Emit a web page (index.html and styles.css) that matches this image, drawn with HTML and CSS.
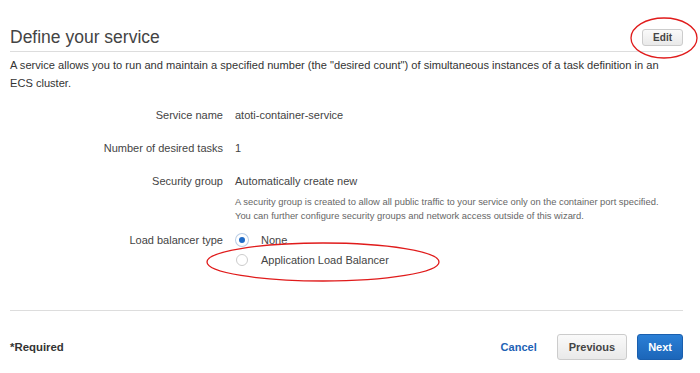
FILE: index.html
```html
<!DOCTYPE html>
<html lang="en">
<head>
  <meta charset="UTF-8">
  <title>Define your service</title>
  <link rel="stylesheet" href="styles.css">
</head>
<body>
  <div class="wizard">
    <div class="section-header">
      <h2>Define your service</h2>
      <button class="btn btn-small">Edit</button>
      <svg class="mark mark-edit" viewBox="0 0 70 44"><ellipse cx="35" cy="22" rx="33" ry="20" /></svg>
    </div>

    <p class="intro">A service allows you to run and maintain a specified number (the "desired count") of simultaneous instances of a task definition in an ECS cluster.</p>

    <div class="form">
      <div class="label">Service name</div>
      <div class="value">atoti-container-service</div>

      <div class="label">Number of desired tasks</div>
      <div class="value">1</div>

      <div class="label">Security group</div>
      <div class="value value-last">
        Automatically create new
        <div class="hint">A security group is created to allow all public traffic to your service only on the container port specified.<br>You can further configure security groups and network access outside of this wizard.</div>
      </div>

      <div class="label">Load balancer type</div>
      <div class="value radios">
        <label class="radio"><span class="dot checked"></span>None</label>
        <label class="radio"><span class="dot"></span>Application Load Balancer</label>
        <svg class="mark mark-alb" viewBox="0 0 236 42"><ellipse cx="118" cy="21" rx="116" ry="19" /></svg>
      </div>
    </div>

    <div class="footer">
      <span class="required">*Required</span>
      <div class="actions">
        <a class="link" href="#">Cancel</a>
        <button class="btn">Previous</button>
        <button class="btn btn-primary">Next</button>
      </div>
    </div>
  </div>
</body>
</html>
```

FILE: styles.css
```css
body {
  margin: 0;
  font-family: "Liberation Sans", Arial, sans-serif;
  color: #444;
  background-color: #fff;
}

.wizard {
  width: 673px;
  margin-left: 10px;
}

.section-header {
  position: relative;
  display: flex;
  justify-content: space-between;
  align-items: flex-end;
  height: 51px;
  border-bottom: 1px solid #ddd;
}

.section-header h2 {
  margin: 0 0 3px;
  font-size: 17.5px;
  line-height: 22px;
  font-weight: normal;
  color: #444;
}

.btn {
  font-family: "Liberation Sans", Arial, sans-serif;
  font-size: 11px;
  font-weight: bold;
  color: #444;
  background: linear-gradient(#fafafa, #e9e9e9);
  border: 1px solid #ccc;
  border-radius: 3px;
  height: 26px;
  padding: 0 11px;
}

.btn-small {
  font-size: 10px;
  height: 17px;
  padding: 0 10px;
  margin-bottom: 5px;
}

.btn-primary {
  color: #fff;
  background: linear-gradient(#2b7fd6, #1c66b9);
  border-color: #1a5fae;
  padding: 0 10px;
}

.mark {
  position: absolute;
  fill: none;
  stroke: #e01b1b;
  stroke-width: 1.3;
  overflow: visible;
}

.mark-edit {
  right: -16px;
  top: 16px;
  width: 70px;
  height: 44px;
}

.intro {
  max-width: 655px;
  margin: 4px 0 0;
  font-size: 11.1px;
  line-height: 18px;
  color: #333;
}

.form {
  display: grid;
  grid-template-columns: 213px 1fr;
  column-gap: 12px;
  margin-top: 15px;
  font-size: 11px;
  line-height: 16px;
}

.label {
  text-align: right;
  margin-bottom: 17px;
}

.value {
  margin-bottom: 17px;
}

.value-last {
  margin-bottom: 9px;
}

.hint {
  margin-top: 6px;
  font-size: 9.4px;
  line-height: 14px;
  color: #666;
}

.radios {
  position: relative;
  display: flex;
  flex-direction: column;
  gap: 4px;
  margin-bottom: 0;
}

.radio {
  display: flex;
  align-items: center;
  gap: 13px;
  margin-left: 1px;
}

.dot {
  width: 12px;
  height: 12px;
  border: 1px solid #ccc;
  border-radius: 50%;
  box-sizing: border-box;
  background: #fff;
}

.dot.checked {
  border: 3px solid #fff;
  background: #1f6bc7;
  box-shadow: 0 0 0 1px #b9cde6;
}

.mark-alb {
  left: -30px;
  top: 9px;
  width: 236px;
  height: 42px;
}

.footer {
  display: flex;
  justify-content: space-between;
  align-items: center;
  margin-top: 42px;
  padding-top: 23px;
  border-top: 1px solid #ddd;
}

.required {
  font-size: 11.4px;
  font-weight: bold;
  color: #333;
}

.actions {
  display: flex;
  align-items: center;
  gap: 10px;
}

.link {
  font-size: 11px;
  font-weight: bold;
  color: #1d62b5;
  text-decoration: none;
  margin-right: 10px;
}
```
